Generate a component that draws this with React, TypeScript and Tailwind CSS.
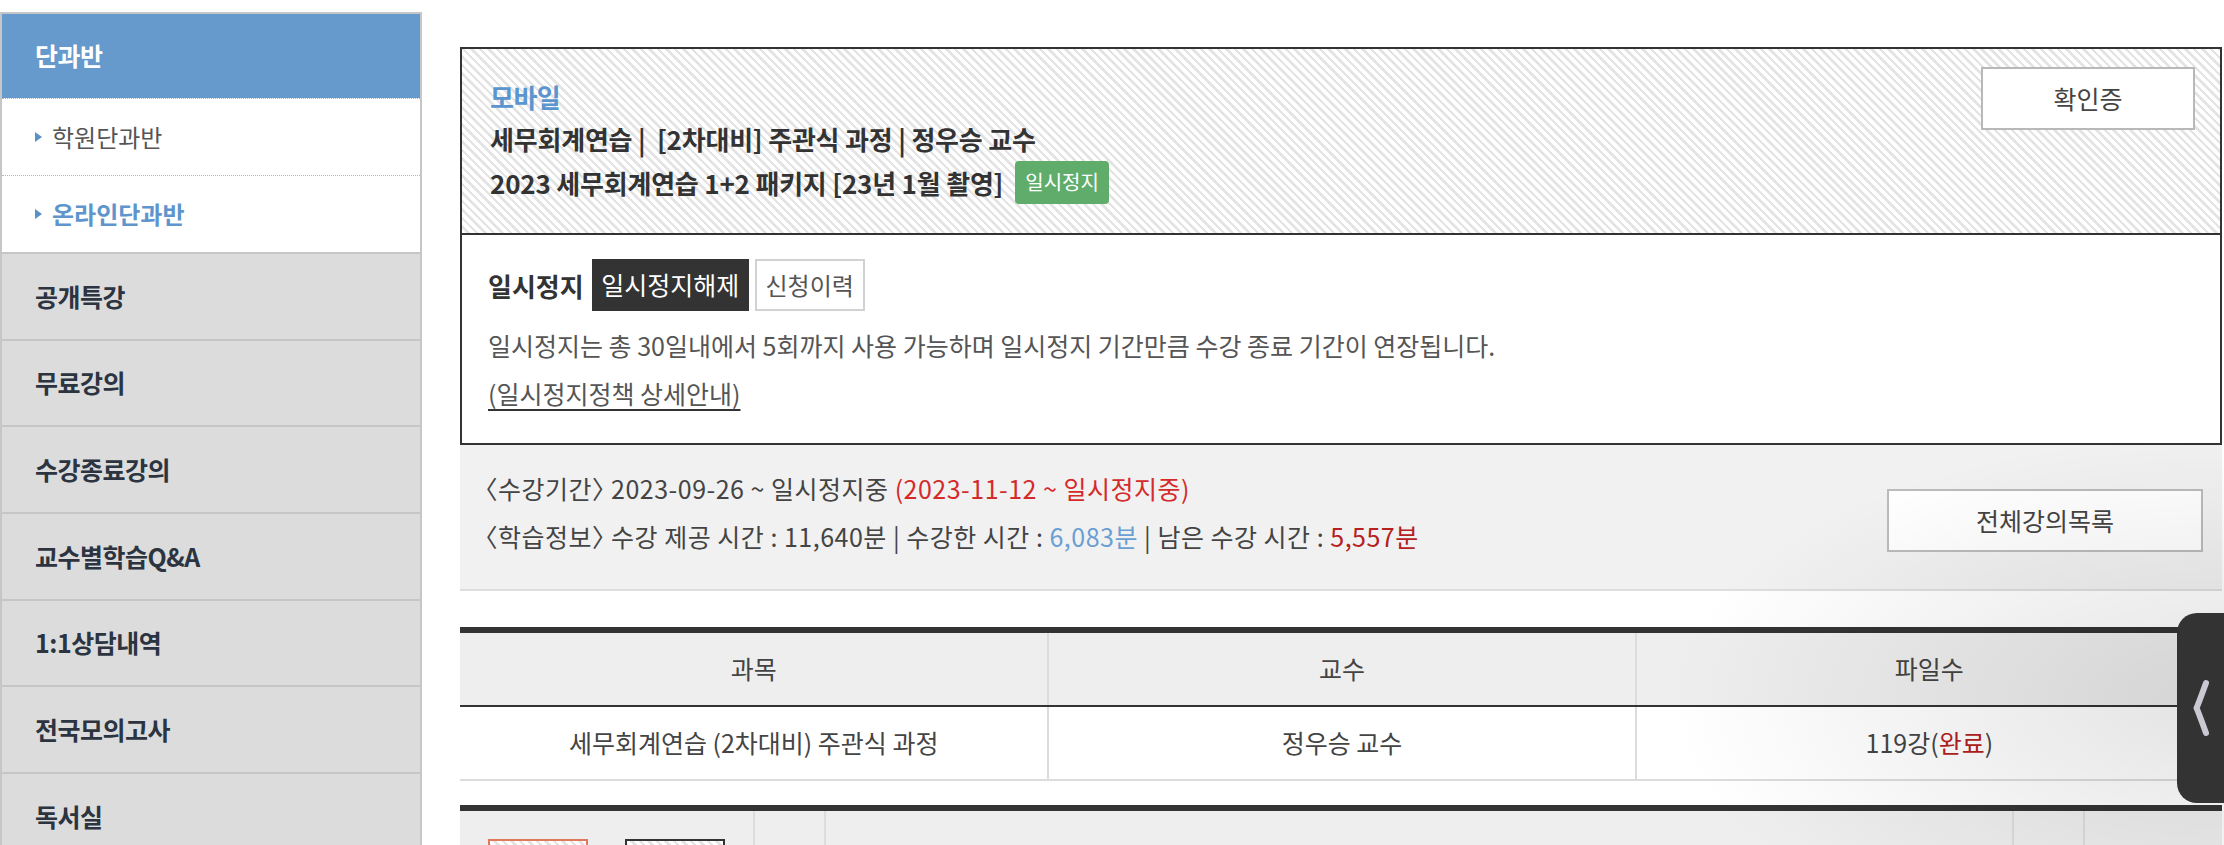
const MENU = ['공개특강', '무료강의', '수강종료강의', '교수별학습Q&A', '1:1상담내역', '전국모의고사', '독서실']

const HATCH =
  'bg-[repeating-linear-gradient(45deg,#ffffff_0px,#ffffff_3.5px,#e4e4e4_3.5px,#e4e4e4_6px)]'

function Sidebar() {
  return (
    <aside className="mt-[12px] w-[422px] shrink-0 border-x-2 border-t-2 border-[#c6c6c6]">
      <div className="flex h-[84px] items-center bg-[#6699cc] pl-[33px] text-[25px] font-bold tracking-[-0.5px] text-white">
        단과반
      </div>
      <div className="flex h-[77px] items-center border-t border-dotted border-[#b4b4b4] bg-white pl-[33px]">
        <span className="h-0 w-0 border-y-[5px] border-l-[7px] border-y-transparent border-l-[#5b8fc7]" />
        <span className="ml-[10px] text-[24px] text-[#555]">학원단과반</span>
      </div>
      <div className="flex h-[77px] items-center border-t border-dotted border-[#b4b4b4] bg-white pl-[33px]">
        <span className="h-0 w-0 border-y-[5px] border-l-[7px] border-y-transparent border-l-[#5b8fc7]" />
        <span className="ml-[10px] text-[24px] font-bold text-[#5f95cc]">온라인단과반</span>
      </div>
      {MENU.map((label) => (
        <div
          key={label}
          className="flex h-[86.7px] items-center border-t-2 border-[#c6c6c6] bg-[#dcdcdc] pl-[33px] text-[25px] font-bold tracking-[-0.5px] text-[#2b3440]"
        >
          {label}
        </div>
      ))}
    </aside>
  )
}

function CourseBox() {
  return (
    <section className="border-2 border-[#333]">
      <div className={`flex h-[186px] justify-between border-b-2 border-[#333] pl-[28px] pr-[25px] pt-[18px] ${HATCH}`}>
        <div className="pt-[9px]">
          <div className="text-[26px] font-bold leading-[42px] tracking-[-0.5px] text-[#5b95cf]">모바일</div>
          <div className="text-[26px] font-bold leading-[42px] tracking-[-0.2px]">
            세무회계연습 |&nbsp; [2차대비] 주관식 과정 | 정우승 교수
          </div>
          <div className="flex h-[44px] items-center">
            <span className="text-[26px] font-bold tracking-[-0.2px]">2023 세무회계연습 1+2 패키지 [23년 1월 촬영]</span>
            <span className="ml-[12px] flex h-[43px] items-center rounded-[4px] bg-[#60ad6b] px-[10px] text-[20px] text-white">
              일시정지
            </span>
          </div>
        </div>
        <button className="flex h-[63px] w-[214px] items-center justify-center border-2 border-[#b8b8b8] bg-white text-[25px] text-[#444]">
          확인증
        </button>
      </div>
      <div className="bg-white pb-[28px] pl-[26px] pt-[24px]">
        <div className="flex h-[52px] items-center">
          <span className="mr-[8px] text-[26px] font-bold">일시정지</span>
          <button className="h-[52px] w-[157px] bg-[#333] text-[25px] text-white">일시정지해제</button>
          <button className="ml-[6px] h-[52px] w-[110px] border-2 border-[#d2d2d2] bg-white text-[24px] text-[#555]">
            신청이력
          </button>
        </div>
        <p className="mt-[12px] text-[25px] leading-[44px] text-[#555]">
          일시정지는 총 30일내에서 5회까지 사용 가능하며 일시정지 기간만큼 수강 종료 기간이 연장됩니다.
        </p>
        <a className="mt-[4px] block w-fit text-[25px] leading-[44px] text-[#555] underline decoration-[#333] underline-offset-[5px]">
          (일시정지정책 상세안내)
        </a>
      </div>
    </section>
  )
}

function StudyInfo() {
  return (
    <div className="flex h-[146px] items-start justify-between border-b-2 border-[#dedede] bg-[#f1f1f1] pl-[25px] pr-[19px] pt-[19px]">
      <div className="text-[25px] leading-[48px] tracking-[0.5px] text-[#444] [font-feature-settings:'halt']">
        <p>
          〈수강기간〉 2023-09-26 ~ 일시정지중{' '}
          <span className="text-[#d42a2a]">(2023-11-12 ~ 일시정지중)</span>
        </p>
        <p>
          〈학습정보〉 수강 제공 시간 : 11,640분 | 수강한 시간 : <span className="text-[#6a9fd4]">6,083분</span> | 남은 수강
          시간 : <span className="text-[#b52020]">5,557분</span>
        </p>
      </div>
      <button className="mt-[25px] h-[63px] w-[316px] border-2 border-[#bbb] bg-white text-[25px] text-[#444]">
        전체강의목록
      </button>
    </div>
  )
}

function LectureTable() {
  return (
    <div className="mt-[36px] border-t-[6px] border-[#333] text-[25px] text-[#444]">
      <div className="grid h-[74px] grid-cols-3 border-b-2 border-[#333] bg-[#eeeeee]">
        <div className="flex items-center justify-center">과목</div>
        <div className="flex items-center justify-center border-l-2 border-[#dcdcdc]">교수</div>
        <div className="flex items-center justify-center border-l-2 border-[#dcdcdc]">파일수</div>
      </div>
      <div className="grid h-[74px] grid-cols-3 border-b-2 border-[#dcdcdc] bg-white">
        <div className="flex items-center justify-center">세무회계연습 (2차대비) 주관식 과정</div>
        <div className="flex items-center justify-center border-l-2 border-[#dcdcdc]">정우승 교수</div>
        <div className="flex items-center justify-center border-l-2 border-[#dcdcdc]">
          119강(<span className="text-[#b52020]">완료</span>)
        </div>
      </div>
    </div>
  )
}

function BottomTable() {
  return (
    <div className="mt-[24px] flex h-[80px] border-t-[6px] border-[#333] bg-[#eeeeee]">
      <div className="flex w-[293px] items-start pl-[28px] pt-[28px]">
        <div className={`h-[40px] w-[100px] border-2 border-[#e0785c] ${HATCH}`} />
        <div className={`ml-[37px] h-[40px] w-[100px] border-2 border-[#333] ${HATCH}`} />
      </div>
      <div className="w-[71px] border-l-2 border-[#dcdcdc]" />
      <div className="flex-1 border-l-2 border-[#dcdcdc]" />
      <div className="w-[71px] border-l-2 border-[#dcdcdc]" />
      <div className="w-[139px] border-l-2 border-[#dcdcdc]" />
    </div>
  )
}

function SideTab() {
  return (
    <>
      <div className="pointer-events-none absolute right-0 top-[430px] h-[415px] w-[560px] bg-[radial-gradient(ellipse_at_100%_65%,rgba(0,0,0,0.11),rgba(0,0,0,0)_70%)]" />
      <div className="absolute right-0 top-[613px] flex h-[190px] w-[47px] items-center justify-center rounded-l-[20px] bg-[#333]">
        <svg width="20" height="60" viewBox="0 0 20 60" fill="none">
          <path d="M15 5 Q7 27 5.5 30 Q7 33 15 55" stroke="#c9c9d3" strokeWidth="6" strokeLinecap="round" strokeLinejoin="round" />
        </svg>
      </div>
    </>
  )
}

export default function App() {
  return (
    <div className="relative flex h-[845px] w-full overflow-hidden bg-white font-['Noto_Sans_CJK_KR','Noto_Sans',sans-serif] text-[#333]">
      <Sidebar />
      <main className="ml-[38px] mr-[2px] min-w-0 flex-1 pt-[47px]">
        <CourseBox />
        <StudyInfo />
        <LectureTable />
        <BottomTable />
      </main>
      <SideTab />
    </div>
  )
}
